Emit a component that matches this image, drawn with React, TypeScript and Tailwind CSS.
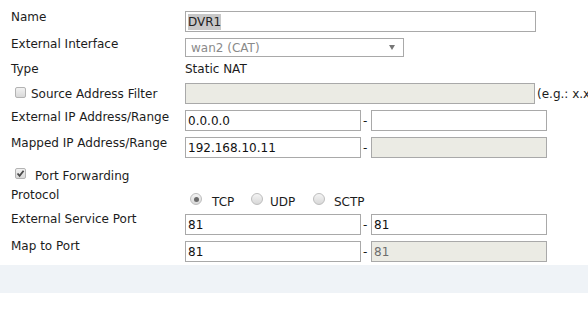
import React from "react";

const font = { fontFamily: '"DejaVu Sans", Verdana, sans-serif' };

function Box({ children, className = "" }: { children?: React.ReactNode; className?: string }) {
  return (
    <div className={`shrink-0 flex items-center border border-[#a9a9a9] pl-[2px] text-[12px] leading-none ${className}`}>
      {children}
    </div>
  );
}

function Check({ checked }: { checked?: boolean }) {
  return (
    <div className="shrink-0 w-[11px] h-[11px] rounded-[2px] border border-[#b3b3b3] bg-gradient-to-b from-[#f2f2f2] to-[#d9d9d9] flex items-center justify-center">
      {checked && (
        <svg width="9" height="9" viewBox="0 0 9 9">
          <path d="M1.5 4.5 L3.6 6.8 L7.6 1.8" stroke="#4a4a4a" strokeWidth="1.8" fill="none" />
        </svg>
      )}
    </div>
  );
}

function Radio({ checked }: { checked?: boolean }) {
  return (
    <div className="shrink-0 w-[12px] h-[12px] rounded-full border border-[#bdbdbd] bg-gradient-to-b from-[#f4f4f4] to-[#d8d8d8] flex items-center justify-center">
      {checked && <div className="w-[5px] h-[5px] rounded-full bg-[#6a6a6a]" />}
    </div>
  );
}

function Label({ children }: { children: React.ReactNode }) {
  return <div className="w-[185px] shrink-0 pl-[11px] text-[12px] leading-[15px] text-[#1c1c1c]">{children}</div>;
}

function Dash() {
  return <div className="shrink-0 w-[10px] text-[12px] leading-none text-[#1c1c1c] pl-[2px]">-</div>;
}

export default function App() {
  return (
    <div className="w-[588px] h-[329px] bg-white overflow-hidden" style={font}>
      <div className="pt-[10px]">
        {/* Name */}
        <div className="flex h-[27px] items-start">
          <Label>Name</Label>
          <Box className="mt-[1px] w-[351px] h-[21px]">
            <span className="bg-[#c8c8c8] text-[#222] py-[2px]">DVR1</span>
          </Box>
        </div>
        {/* External Interface */}
        <div className="flex h-[25px] items-start">
          <Label>External Interface</Label>
          <div className="shrink-0 mt-[1px] w-[219px] h-[19px] border border-[#a9a9a9] flex items-center justify-between pl-[5px] pr-[8px] text-[12px] text-[#8a8a8a]">
            <span>wan2 (CAT)</span>
            <svg width="6" height="5" viewBox="0 0 6 5">
              <path d="M0 0 H6 L3 5 Z" fill="#777" />
            </svg>
          </div>
        </div>
        {/* Type */}
        <div className="flex h-[21px] items-start">
          <Label>Type</Label>
          <div className="text-[12px] leading-[15px] text-[#1c1c1c]">Static NAT</div>
        </div>
        {/* Source Address Filter */}
        <div className="flex h-[27px] items-start">
          <div className="w-[185px] shrink-0 flex items-start pl-[15px]">
            <div className="mt-[4px]">
              <Check />
            </div>
            <div className="ml-[5px] mt-[4px] text-[12px] leading-[15px] text-[#1c1c1c] whitespace-nowrap">Source Address Filter</div>
          </div>
          <Box className="w-[350px] h-[21px] bg-[#ebebe4]" />
          <div className="shrink-0 mt-[4px] ml-[2px] text-[12px] leading-[15px] text-[#1c1c1c] whitespace-nowrap">(e.g.: x.x.x.x)</div>
        </div>
        {/* External IP */}
        <div className="flex h-[26px] items-start">
          <Label>External IP Address/Range</Label>
          <div className="flex items-center">
            <Box className="w-[176px] h-[21px] text-[#111]">0.0.0.0</Box>
            <Dash />
            <Box className="w-[176px] h-[21px]" />
          </div>
        </div>
        {/* Mapped IP */}
        <div className="flex h-[32px] items-start">
          <Label>Mapped IP Address/Range</Label>
          <div className="flex items-center mt-[1px]">
            <Box className="w-[176px] h-[21px] text-[#111]">192.168.10.11</Box>
            <Dash />
            <Box className="w-[176px] h-[21px] bg-[#ebebe4]" />
          </div>
        </div>
        {/* Port Forwarding */}
        <div className="flex h-[20px] items-start pl-[15px]">
          <Check checked />
          <div className="ml-[9px] mt-[1px] text-[12px] leading-[15px] text-[#1c1c1c]">Port Forwarding</div>
        </div>
        {/* Protocol */}
        <div className="flex h-[24px] items-start">
          <Label>Protocol</Label>
          <div className="flex items-start text-[12px] leading-[15px] text-[#1c1c1c]">
            <div className="ml-[5px] mt-[5px]"><Radio checked /></div>
            <div className="ml-[10px] mt-[7px] w-[39px]">TCP</div>
            <div className="mt-[5px]"><Radio /></div>
            <div className="ml-[7px] mt-[7px] w-[43px]">UDP</div>
            <div className="mt-[5px]"><Radio /></div>
            <div className="ml-[9px] mt-[7px]">SCTP</div>
          </div>
        </div>
        {/* External Service Port */}
        <div className="flex h-[27px] items-start">
          <Label>External Service Port</Label>
          <div className="flex items-center mt-[2px]">
            <Box className="w-[176px] h-[21px] text-[#111]">81</Box>
            <Dash />
            <Box className="w-[176px] h-[21px] text-[#111]">81</Box>
          </div>
        </div>
        {/* Map to Port */}
        <div className="flex h-[26px] items-start">
          <Label>Map to Port</Label>
          <div className="flex items-center mt-[2px]">
            <Box className="w-[176px] h-[21px] text-[#111]">81</Box>
            <Dash />
            <Box className="w-[176px] h-[21px] bg-[#ebebe4] text-[#6d6d6d]">81</Box>
          </div>
        </div>
        <div className="h-[28px] bg-[#eff3f7]" />
      </div>
    </div>
  );
}
